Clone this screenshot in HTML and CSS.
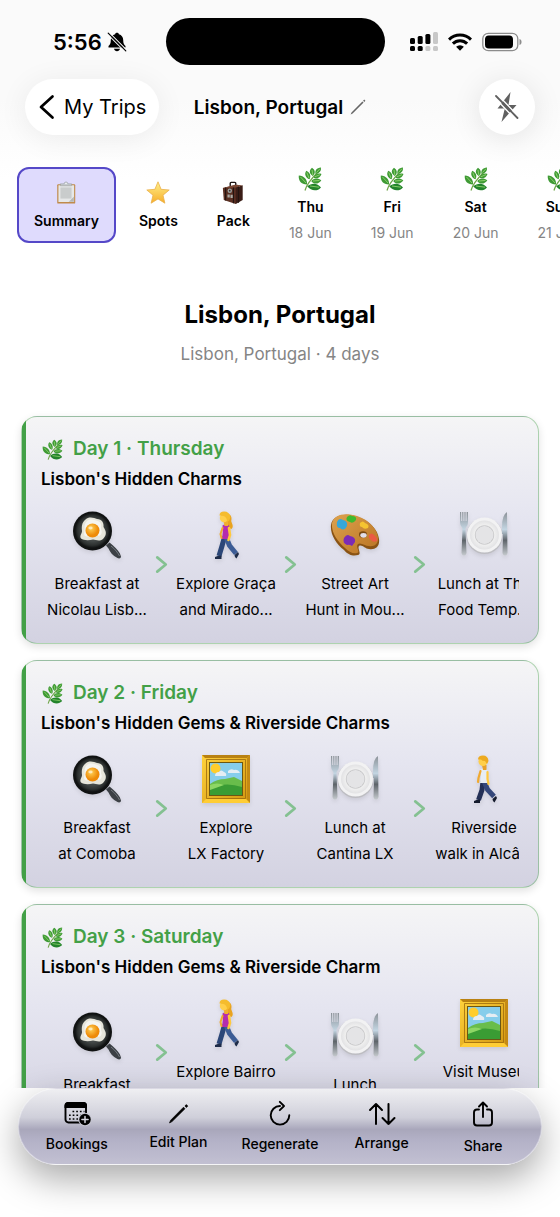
FILE: index.html
```html
<!DOCTYPE html>
<html lang="en">
<head>
    <meta charset="UTF-8">
    <meta name="viewport" content="width=device-width, initial-scale=1.0">
    <title>Lisbon, Portugal</title>
    <link rel="stylesheet" href="styles.css">
</head>
<body>
    <!-- shared icons -->
    <svg class="sprite" aria-hidden="true">
        <defs>
            <linearGradient id="gold" x1="0" y1="0" x2="0" y2="1"><stop offset="0" stop-color="#fff08a"/><stop offset="1" stop-color="#f7ae2a"/></linearGradient>
            <linearGradient id="leafFill" x1="0" y1="0" x2="1" y2="1"><stop offset="0" stop-color="#7cc95a"/><stop offset="1" stop-color="#1f8a2b"/></linearGradient>
            <linearGradient id="frameFill" x1="0" y1="0" x2="1" y2="1"><stop offset="0" stop-color="#ffd23c"/><stop offset="1" stop-color="#d3960f"/></linearGradient>
            <linearGradient id="wood" x1="0" y1="0" x2="1" y2="1"><stop offset="0" stop-color="#dda24e"/><stop offset="1" stop-color="#b97322"/></linearGradient>
            <linearGradient id="steel" x1="0" y1="0" x2="0" y2="1"><stop offset="0" stop-color="#8c9298"/><stop offset=".4" stop-color="#c3d5e2"/><stop offset=".65" stop-color="#5d6369"/><stop offset="1" stop-color="#c5cace"/></linearGradient>
            <radialGradient id="panFill"><stop offset=".6" stop-color="#454a49"/><stop offset=".85" stop-color="#2c302f"/><stop offset="1" stop-color="#101212"/></radialGradient>
            <radialGradient id="yolk" cx=".4" cy=".35"><stop offset="0" stop-color="#ffd257"/><stop offset="1" stop-color="#ee8b08"/></radialGradient>
            <radialGradient id="plateFill"><stop offset=".5" stop-color="#dededf"/><stop offset=".62" stop-color="#c2c2c4"/><stop offset=".7" stop-color="#efefef"/><stop offset="1" stop-color="#e2e2e4"/></radialGradient>
        </defs>
        <symbol id="herb" viewBox="0 0 24 24">
            <path d="M7 23.500C8.500 17 14 11 20 5" fill="none" stroke="#6fa548" stroke-width="1.200"/>
            <g fill="#3f9a35">
                <path d="M23 .5c-4.500.3-6.300 3-5.500 6.300C21.500 6.500 23.300 4 23 .5z"/>
                <path d="M14 .8c-3 2.200-3 6 .8 8.200 3-2.500 2.600-6-.8-8.200z"/>
                <path d="M8.300 3.700c-2.300 3-.8 7 3.200 8.600 2-3.500.3-7-3.200-8.600z"/>
                <path d="M.8 8.500c-.6 5 2.200 9 8.200 9C9.500 12.500 6 8.800.8 8.500z"/>
                <path d="M23.500 7c-3.800-1.200-7 .5-7.800 3.700 3.200 1.600 6.600 0 7.800-3.700z"/>
                <path d="M23.300 13.500c-3.600-3-8-2.300-10 .7 2.700 3.600 7.300 3 10-.7z"/>
                <path d="M23 20.500c-3.500-4.800-9.300-5-13.800-1.200 4 5.200 10.300 5.200 13.800 1.200z" fill="#23832b"/>
            </g>
            <g fill="none" stroke="#8fd46c" stroke-width=".9"><path d="M2.500 10l5.500 6M8.800 5.500l2.200 5.500M14 3l.8 5M12 19l9 1.200M15 14l6.500-.6M18.500 5.500L22 1.700M17 9.700l5-2"/></g>
        </symbol>
        <symbol id="clipboard" viewBox="0 0 24 26">
            <rect x="2.500" y="3.500" width="19.500" height="21" rx="1" fill="#c08a4a"/>
            <path d="M3.800 4.500h17v18.200h-17z" fill="#e6e8e8"/>
            <path d="M6 7h12v12H6z" fill="#c9cccc"/>
            <path d="M20.500 17v5.500H15z" fill="#b4b7b6"/>
            <path d="M6 3h3.700C10 1.800 10.800 1 12 1s2 .8 2.300 2H18v2.200H6z" fill="#c3c9cc" stroke="#8f9699" stroke-width=".5"/>
            <circle cx="12" cy="2.600" r=".8" fill="#fff"/>
        </symbol>
        <symbol id="star" viewBox="0 0 24 24">
            <path d="M12 .8l3.100 7.500 8.100.7-6.200 5.200 1.900 8-6.900-4.300-6.900 4.300 1.900-8L.8 9l8.100-.7z" fill="url(#gold)" stroke="#eab04a" stroke-width=".8" stroke-linejoin="round"/>
        </symbol>
        <symbol id="suitcase" viewBox="0 0 24 26">
            <path d="M9 6V2.500Q9 1.500 10 1.500h4q1 0 1 1V5" fill="none" stroke="#1d1513" stroke-width="1.500"/>
            <path d="M1 7.500L17 4v17.500L15 25 2 20.500z" fill="#5a2f22"/>
            <path d="M15 7l7.500-2.500v16L15 25z" fill="#3a1d16"/>
            <path d="M1 7.500L14 4l8.500.5L15 7z" fill="#7a4734"/>
            <path d="M4 7v14M12.500 7v17M18 6v17.500" stroke="#221410" stroke-width="1.200"/>
            <circle cx="8.500" cy="10.500" r="2.400" fill="#9da5a3"/><circle cx="8.500" cy="10.500" r="1" fill="#42302b"/>
            <path d="M6 14.500h2.500V18H6zM9.300 14.800h2.400v3.500H9.300z" fill="#a9aaa3"/>
        </symbol>
        <symbol id="pan" viewBox="0 0 50 50">
            <path d="M34 35.500l3.500-3 3 2.500c4 3.500 7.500 7 8.500 11.500 0 2-2 2.500-3.500 1.500-5-2.500-7.500-6-9-9.500z" fill="#3c4045"/>
            <path d="M39 36c4 3 7 7 8.500 10" fill="none" stroke="#747a80" stroke-width="1"/>
            <circle cx="20.500" cy="21" r="19.500" fill="#101212"/>
            <circle cx="20.500" cy="20.500" r="17.500" fill="url(#panFill)"/>
            <path d="M13 10c4-4 9-2 12-1 5 0 7 4 6.500 8 2.500 4 4 7.500-.5 12-4 3-7 .5-10 .5-4 1-9.500 1-12-1-2-3 1.500-5 1-8-.5-4 0-8 3-10.500z" fill="#e6e5da"/>
            <path d="M15 11c4-3 8-.5 12 .5 3 2 2 5 2 8 2 3 0 7-4 6.500-5-1-8 1.500-12 0-2-2 0-5-.5-8 0-3 .5-5 2.500-7z" fill="#fff" opacity=".6"/>
            <circle cx="20.500" cy="20.500" r="7" fill="url(#yolk)"/>
            <ellipse cx="18.500" cy="18" rx="2.200" ry="1.400" fill="#fff" opacity=".6"/>
        </symbol>
        <symbol id="walk-woman" viewBox="0 0 50 50">
            <path d="M23.500 27l-2.500 9-3 10" fill="none" stroke="#2c4778" stroke-width="5" stroke-linejoin="round"/>
            <path d="M25 27l3.500 8.500 6.500 8" fill="none" stroke="#3c5c95" stroke-width="5" stroke-linejoin="round"/>
            <path d="M14 47q2-1.500 6.500-1.500V49H14zM33.500 45l3.500-3 1 2-2.500 4.500q-2-1-2-3.500z" fill="#1e2c49"/>
            <path d="M27 4c3.500 1 4 4 3.200 7 .6 3 3 5 .3 8-3.500-1-4.500-3-4.500-6z" fill="#e9a31f"/>
            <path d="M21.500 15.500q3.500-2.500 6.500 0l1 6-1 7.500h-7l.8-7z" fill="#b52cae"/>
            <path d="M21.500 18l-2 6 1 4" fill="none" stroke="#f0a930" stroke-width="2" stroke-linecap="round"/>
            <path d="M28 18l1 7-1.500 5" fill="none" stroke="#ffc83e" stroke-width="2.600" stroke-linecap="round"/>
            <path d="M22.500 11h4.500v5h-3.500z" fill="#f1ae2f"/>
            <circle cx="23" cy="8" r="4.200" fill="#ffcf4a"/>
            <path d="M18.500 5.500q0-4 4.500-4 5.500 0 6.500 5.500-1 4.500-3.500 4.500 0-4.500-3.500-5.500z" fill="#f5bc2d"/>
        </symbol>
        <symbol id="walk-man" viewBox="0 0 50 50">
            <path d="M24 27l-1 9-3.500 10" fill="none" stroke="#232f56" stroke-width="5" stroke-linejoin="round"/>
            <path d="M25 27l3.500 8.500 6.500 7" fill="none" stroke="#34477a" stroke-width="5" stroke-linejoin="round"/>
            <path d="M15 47q2-1.500 6-1.500V49h-6zM33.500 45l3.500-3 1 2-2.500 4.500q-2-1-2-3.500z" fill="#141a2c"/>
            <path d="M21.500 15.500q3.500-2.500 6.500 0l1 6-1 7.500h-7l.8-7z" fill="#e7edf4"/>
            <path d="M21.500 17l-2 7-.5 4" fill="none" stroke="#f0a930" stroke-width="2.200" stroke-linecap="round"/>
            <path d="M28.500 18l0 7 1 5" fill="none" stroke="#ffc83e" stroke-width="2.200" stroke-linecap="round"/>
            <path d="M23 11h4.500v5H24z" fill="#e8a02a"/>
            <circle cx="24" cy="7.500" r="4.500" fill="#ffcf4a"/>
            <path d="M19 5.500q0-4 5-4t5.500 5.500l-1.500 3-2-3q-3 0-4-1.500z" fill="#edaa20"/>
        </symbol>
        <symbol id="palette" viewBox="0 0 50 50">
            <path d="M1 15C2 6 14 2 28 7c12 4 20 13 21 22 1 8-4 11-10 10-4 0-7-5-10-3-2 2 3 8-1 9-4 1-9 1-14-5C6 34 0 24 1 15z" fill="#8a5313"/>
            <path d="M2 13C4 5 14 2 27 6c12 4 20 13 21 21 1 7-4 10-9 9-4 0-8-4-11-2-3 3 3 8-1 9-4 1-8-1-12-5C7 31 1 22 2 13z" fill="url(#wood)"/>
            <ellipse cx="33" cy="24.500" rx="4" ry="3.200" fill="#7a4a12"/><ellipse cx="33.500" cy="25.300" rx="3.200" ry="2.400" fill="#e2dfe8"/>
            <path d="M7 12q2-5 6-2 5 1 4 6-3 6-7 2-4 0-3-6z" fill="#35a7da"/>
            <path d="M17 7q3-3 5-1 5 0 4 4-3 4-6 2-5-1-3-5z" fill="#3eb92f"/>
            <path d="M30 13q3-3 5 0 5 2 3 5-4 2-6-1-3 0-2-4z" fill="#f5c331"/>
            <path d="M39 25q3-3 5 0 4 3 3 6-4 2-6-1-3-2-2-5z" fill="#ea5a43"/>
            <path d="M14 28q3-5 6-2 6 1 5 6l-3 4q-3-2-5-1-5-2-3-7z" fill="#7c2bb5"/>
        </symbol>
        <symbol id="plate" viewBox="0 0 50 50">
            <circle cx="25.500" cy="26" r="18" fill="#bdbdc2"/>
            <circle cx="25.500" cy="25" r="17.500" fill="#f2f2f3"/>
            <circle cx="25.500" cy="25" r="14.500" fill="url(#plateFill)"/>
            <circle cx="25.500" cy="25" r="9" fill="#e4e4e6"/>
            <path d="M1 2h1.200v9h1V2h1.200v9h1V2h1.200v9h1V2H9v10c0 4-2.500 5-2.500 7L7.500 43q-.5 2.500-2.500 2.500T2.500 43l1-24c0-2-2.500-3-2.500-7z" fill="url(#steel)"/>
            <path d="M48 2q-5 3-5 15v7h1l-.5 19q.5 2.500 2.500 2.500t2.500-2.500z" fill="url(#steel)"/>
        </symbol>
        <symbol id="painting" viewBox="0 0 50 50">
            <path d="M1 1h48v48H1z" fill="url(#frameFill)"/>
            <path d="M1 1h48l-3 3H4z" fill="#b98112"/><path d="M49 1v48l-3-3V4z" fill="#c48a14"/>
            <path d="M1 49h48l-4-4H5z" fill="#ffcd35"/>
            <path d="M5.500 5.500h39v39h-39z" fill="none" stroke="#9c6a0c" stroke-width=".8"/>
            <path d="M8 8h34v34H8z" fill="#6b5713"/>
            <path d="M9 9h32v32H9z" fill="#86cdeb"/>
            <circle cx="14.500" cy="14.500" r="5" fill="#ffcd2c"/>
            <path d="M14 22q0-4 4-4 2-3 5 0 3 1 2 4zM27 17q3-3 6-1 4-1 6 3H27z" fill="#e5edf3"/>
            <path d="M9 30q7-5 15-5l9-2 8 4v14H9z" fill="#69bd4b"/>
            <path d="M9 35q14-8 32-2v8H9z" fill="#3a9c34"/>
            <path d="M9 31q7-3 14 0l-14 5z" fill="#8ed765"/>
        </symbol>
        <symbol id="chevron" viewBox="0 0 12 20">
            <path d="M1.500 2.500l9 7.500-9 7.500" fill="none" stroke="currentColor" stroke-width="2.800" stroke-linecap="round" stroke-linejoin="round"/>
        </symbol>
    </svg>

    <div class="app">
        <div class="status-bar">
            <div class="status-left">
                <span class="clock">5:56</span>
                <svg width="20" height="20" viewBox="0 0 20 20">
                    <path d="M10 .8c1 0 1.800.6 1.900 1.400 2.800.8 4.300 3 4.300 5.800 0 3.300.8 4.700 2.300 6v1.400H1.500V14c1.500-1.300 2.300-2.700 2.300-6 0-2.800 1.500-5 4.300-5.800C8.200 1.400 9 .8 10 .8zM7 16.800h6c-.3 1.500-1.500 2.400-3 2.400s-2.700-.9-3-2.400z"/>
                    <path d="M2.500.8l17 17M.5 2.200l17 17" stroke="#fafafa" stroke-width="1.100"/>
                    <path d="M1.200 1.200l17.600 17.600" stroke="#000" stroke-width="1.200" stroke-linecap="round"/>
                </svg>
            </div>
            <div class="island"></div>
            <div class="status-right">
                <svg width="28" height="20" viewBox="0 0 28 20">
                    <rect y="6" width="5" height="6" rx="1.500"/><rect x="7.700" y="4" width="5" height="8" rx="1.500"/><rect x="15.400" y="2" width="5" height="10" rx="1.500"/><rect x="23" width="5" height="12" rx="1.500" fill="#c8c8c8"/>
                    <rect y="14" width="5" height="5" rx="1.500"/><rect x="7.700" y="14" width="5" height="5" rx="1.500"/><rect x="15.400" y="14" width="5" height="5" rx="1.500" fill="#c8c8c8"/><rect x="23" y="14" width="5" height="5" rx="1.500" fill="#c8c8c8"/>
                </svg>
                <svg width="24" height="18" viewBox="0 0 24 18">
                    <g fill="none" stroke="#000" stroke-width="3"><path d="M1 6.600a15.600 15.600 0 0 1 22 0"/><path d="M4.900 10.600a10 10 0 0 1 14.200 0"/></g>
                    <path d="M12 17.800l-3.900-4a5.600 5.600 0 0 1 7.800 0z"/>
                </svg>
                <svg width="40" height="20" viewBox="0 0 40 20">
                    <rect x=".8" y="1.300" width="35" height="17.400" rx="5.500" fill="none" stroke="#8c8c8c" stroke-width="1.300"/>
                    <rect x="3" y="3.500" width="28" height="13" rx="3.800"/>
                    <path d="M37.500 7c1.700.6 2 1.700 2 3s-.3 2.400-2 3z" fill="#8c8c8c"/>
                </svg>
            </div>
        </div>

        <header class="nav">
            <a href="#" class="back">
                <svg width="16" height="26" viewBox="0 0 16 26"><path d="M13.500 2.500L2 13l11.500 10.500" fill="none" stroke="#000" stroke-width="2.700" stroke-linecap="round" stroke-linejoin="round"/></svg>
                My Trips
            </a>
            <button class="rename">
                Lisbon, Portugal
                <svg width="16" height="16" viewBox="0 0 16 16"><path d="M14.200.6l1.200 1.200-1.100 1.100-1.200-1.200zM12.400 2.400l1.200 1.200L2.600 14.400l-2 1 .9-2z" fill="#666"/></svg>
            </button>
            <button class="flash" aria-label="Quick actions off">
                <svg width="26" height="32" viewBox="0 0 26 32">
                    <path d="M16.500 1L3.500 17.500h7.300L7.500 31 22.500 14h-8z" fill="#606060"/>
                    <path d="M3.500 3.500L25 26M.5 6.500L22 29" stroke="#fff" stroke-width="1.400"/>
                    <path d="M2 5l21.500 22" stroke="#606060" stroke-width="1.800" stroke-linecap="round"/>
                </svg>
            </button>
        </header>

        <main class="content">
            <nav class="tabs">
                <button class="tab active"><svg class="tab-icon"><use href="#clipboard"/></svg><span class="tab-name">Summary</span></button>
                <button class="tab"><svg class="tab-icon"><use href="#star"/></svg><span class="tab-name">Spots</span></button>
                <button class="tab"><svg class="tab-icon"><use href="#suitcase"/></svg><span class="tab-name">Pack</span></button>
                <button class="tab"><svg class="tab-icon"><use href="#herb"/></svg><span class="tab-name">Thu</span><span class="tab-date">18 Jun</span></button>
                <button class="tab"><svg class="tab-icon"><use href="#herb"/></svg><span class="tab-name">Fri</span><span class="tab-date">19 Jun</span></button>
                <button class="tab"><svg class="tab-icon"><use href="#herb"/></svg><span class="tab-name">Sat</span><span class="tab-date">20 Jun</span></button>
                <button class="tab"><svg class="tab-icon"><use href="#herb"/></svg><span class="tab-name">Sun</span><span class="tab-date">21 Jun</span></button>
            </nav>

            <section class="hero">
                <h1>Lisbon, Portugal</h1>
                <p>Lisbon, Portugal · 4 days</p>
            </section>

            <div class="days">
                <article class="day">
                    <h2><svg class="day-icon"><use href="#herb"/></svg>Day 1 · Thursday</h2>
                    <h3>Lisbon's Hidden Charms</h3>
                    <div class="stops">
                        <div class="stop"><svg><use href="#pan"/></svg><p>Breakfast at<br>Nicolau Lisb...</p></div>
                        <svg class="arrow"><use href="#chevron"/></svg>
                        <div class="stop"><svg><use href="#walk-woman"/></svg><p>Explore Graça<br>and Mirado...</p></div>
                        <svg class="arrow"><use href="#chevron"/></svg>
                        <div class="stop"><svg><use href="#palette"/></svg><p>Street Art<br>Hunt in Mou...</p></div>
                        <svg class="arrow"><use href="#chevron"/></svg>
                        <div class="stop"><svg><use href="#plate"/></svg><p>Lunch at The<br>Food Temp...</p></div>
                    </div>
                </article>

                <article class="day">
                    <h2><svg class="day-icon"><use href="#herb"/></svg>Day 2 · Friday</h2>
                    <h3>Lisbon's Hidden Gems &amp; Riverside Charms</h3>
                    <div class="stops">
                        <div class="stop"><svg><use href="#pan"/></svg><p>Breakfast<br>at Comoba</p></div>
                        <svg class="arrow"><use href="#chevron"/></svg>
                        <div class="stop"><svg><use href="#painting"/></svg><p>Explore<br>LX Factory</p></div>
                        <svg class="arrow"><use href="#chevron"/></svg>
                        <div class="stop"><svg><use href="#plate"/></svg><p>Lunch at<br>Cantina LX</p></div>
                        <svg class="arrow"><use href="#chevron"/></svg>
                        <div class="stop"><svg><use href="#walk-man"/></svg><p>Riverside<br>walk in Alcâ...</p></div>
                    </div>
                </article>

                <article class="day">
                    <h2><svg class="day-icon"><use href="#herb"/></svg>Day 3 · Saturday</h2>
                    <h3>Lisbon's Hidden Gems &amp; Riverside Charm</h3>
                    <div class="stops">
                        <div class="stop"><svg><use href="#pan"/></svg><p>Breakfast</p></div>
                        <svg class="arrow"><use href="#chevron"/></svg>
                        <div class="stop"><svg><use href="#walk-woman"/></svg><p>Explore Bairro<br>&nbsp;</p></div>
                        <svg class="arrow"><use href="#chevron"/></svg>
                        <div class="stop"><svg><use href="#plate"/></svg><p>Lunch</p></div>
                        <svg class="arrow"><use href="#chevron"/></svg>
                        <div class="stop"><svg><use href="#painting"/></svg><p>Visit Museu<br>&nbsp;</p></div>
                    </div>
                </article>
            </div>
        </main>

        <footer class="toolbar">
            <button class="tool">
                <svg width="28" height="28" viewBox="0 0 28 28">
                    <rect x="2.500" y="3" width="20.500" height="19.500" rx="3" fill="none" stroke="#000" stroke-width="1.900"/>
                    <path d="M1.500 8V5.500q0-3.500 3.500-3.500h15.500Q24 2 24 5.500V8z"/>
                    <path d="M9.500 11.500h12M6 15.300h14M6 19h9" fill="none" stroke="#000" stroke-width="1.600" stroke-dasharray="1.700 2"/>
                    <circle cx="22" cy="19.500" r="6.800" fill="#c6c6d1"/>
                    <circle cx="22" cy="19.500" r="5.700"/>
                    <path d="M22 16.400v6.200M18.900 19.500h6.200" stroke="#d6d6df" stroke-width="1.500" stroke-linecap="round"/>
                </svg>
                Bookings
            </button>
            <button class="tool">
                <svg width="24" height="24" viewBox="0 0 24 24"><path d="M20.300 2.600l1.500 1.500-1.400 1.400-1.500-1.500zM17.500 5.200l1.500 1.500L6 19.600 3.500 20.900l1.200-2.700z" stroke="#000" stroke-width=".7" stroke-linejoin="round"/></svg>
                Edit Plan
            </button>
            <button class="tool">
                <svg width="28" height="28" viewBox="0 0 28 28"><g fill="none" stroke="#000" stroke-width="1.900" stroke-linecap="round" stroke-linejoin="round"><path d="M14 6a9.300 9.300 0 1 0 9.300 9.300"/><path d="M13.800 1.800L18 6l-4.200 4.200"/></g></svg>
                Regenerate
            </button>
            <button class="tool">
                <svg width="28" height="26" viewBox="0 0 28 26"><path d="M8 23V3M2 9l6-6 6 6M20.500 3v20M14.500 17l6 6 6-6" fill="none" stroke="#000" stroke-width="2" stroke-linecap="round" stroke-linejoin="round"/></svg>
                Arrange
            </button>
            <button class="tool">
                <svg width="26" height="32" viewBox="0 0 26 32"><path d="M9 11.500H7q-3 0-3 3v10q0 3 3 3h12q3 0 3-3v-10q0-3-3-3h-2M13 19V5M9 8.500l4-4 4 4" fill="none" stroke="#000" stroke-width="1.900" stroke-linecap="round" stroke-linejoin="round"/></svg>
                Share
            </button>
        </footer>
    </div>
</body>
</html>
```

FILE: styles.css
```css
* {
    margin: 0;
    padding: 0;
    box-sizing: border-box;
}

body {
    font-family: Inter, "Noto Sans", sans-serif;
    background: #fff;
    color: #000;
}

button {
    font: inherit;
    color: inherit;
    background: none;
    border: none;
    cursor: pointer;
}

svg {
    display: block;
    flex-shrink: 0;
}

.sprite {
    position: absolute;
    width: 0;
    height: 0;
}

.app {
    height: 100vh;
    display: flex;
    flex-direction: column;
    background: linear-gradient(#fafafa, #fafafa 100px, #fff 180px);
}

/* status bar */
.status-bar {
    display: grid;
    grid-template-columns: 1fr auto 1fr;
    align-items: center;
    padding: 18px 9px 14px 0;
}

.island {
    width: 219px;
    height: 47px;
    border-radius: 24px;
    background: #000;
}

.status-left {
    display: flex;
    align-items: center;
    gap: 5px;
    padding-left: 53px;
}

.clock {
    font-size: 22px;
    font-weight: 600;
}

.status-right {
    display: flex;
    align-items: center;
    gap: 10px;
    padding-left: 25px;
}

/* navigation */
.nav {
    display: grid;
    grid-template-columns: 1fr auto 1fr;
    align-items: center;
    padding: 0 25px;
    margin-bottom: 17px;
}

.back {
    justify-self: start;
    display: flex;
    align-items: center;
    gap: 9px;
    height: 56px;
    padding: 0 13px 0 14px;
    border-radius: 28px;
    background: #fff;
    box-shadow: 0 4px 30px rgba(0, 0, 0, 0.07);
    color: #000;
    font-size: 20px;
    text-decoration: none;
}

.rename {
    display: flex;
    align-items: center;
    gap: 7px;
    font-size: 19px;
    font-weight: 600;
}

.flash {
    justify-self: end;
    display: flex;
    align-items: center;
    justify-content: center;
    width: 56px;
    height: 56px;
    border-radius: 50%;
    background: #fff;
    box-shadow: 0 4px 30px rgba(0, 0, 0, 0.1);
}

.content {
    flex: 1;
    min-height: 0;
    overflow-x: hidden;
    overflow-y: auto;
    scrollbar-width: none;
}

/* tabs */
.tabs {
    display: flex;
    gap: 7px;
    padding: 15px 17px 0;
    overflow: hidden;
}

.tab {
    flex-shrink: 0;
    display: flex;
    flex-direction: column;
    align-items: center;
    justify-content: center;
    gap: 7px;
    padding: 0 16px;
    border-radius: 12px;
}

.tab.active {
    padding: 0 15px;
    border: 2px solid #5548c8;
    background: #dfdbfd;
}

.tab-icon {
    width: 24px;
    height: 24px;
}

.tab-name {
    font-size: 14px;
    font-weight: 600;
    line-height: 18px;
}

.tab-date {
    color: #858585;
    font-size: 14px;
    line-height: 20px;
}

.hero {
    padding: 56px 20px 48px;
    text-align: center;
}

.hero h1 {
    margin-bottom: 9px;
    font-size: 24px;
    font-weight: 700;
    line-height: 32px;
}

.hero p {
    color: #858585;
    font-size: 17px;
    line-height: 28px;
}

/* day cards */
.days {
    display: flex;
    flex-direction: column;
    gap: 16px;
    padding: 0 21px 16px;
}

.day {
    padding: 20px 19px;
    border: 1px solid rgba(67, 160, 71, 0.4);
    border-radius: 16px;
    background:
        linear-gradient(#43a047, #43a047) left / 4px 100% no-repeat,
        linear-gradient(#f5f5f6, #e5e5f0 45%, #d3d2e1);
    box-shadow: 0 3px 8px rgba(0, 0, 0, 0.12);
}

.day h2 {
    display: flex;
    align-items: center;
    gap: 9px;
    margin-bottom: 8px;
    color: #43a047;
    font-size: 19px;
    font-weight: 600;
    line-height: 24px;
}

.day-icon {
    width: 23px;
    height: 21px;
}

.day h3 {
    margin-bottom: 16px;
    font-size: 17px;
    font-weight: 600;
    line-height: 20px;
}

.stops {
    display: flex;
    align-items: center;
    overflow: hidden;
}

.stop {
    flex: 0 0 112px;
    text-align: center;
}

.stop svg {
    width: 50px;
    height: 50px;
    margin: 5px auto 11px;
    filter: drop-shadow(0 2px 2px rgba(0, 0, 0, 0.1));
}

.stop p {
    font-size: 15px;
    line-height: 26px;
    white-space: nowrap;
}

.arrow {
    width: 17px;
    height: 19px;
    color: #84c191;
}

/* bottom toolbar */
.toolbar {
    display: flex;
    align-items: center;
    height: 77px;
    margin: 0 18px 52px;
    padding: 0 7px;
    border: 1px solid rgba(255, 255, 255, 0.4);
    border-radius: 39px;
    background: linear-gradient(#efeff2, #cfcfda 38%, #a9a7bb 54%, #b3b1c7 68%, #c2c0d2);
    box-shadow: 0 14px 36px rgba(0, 0, 0, 0.34);
}

.tool {
    flex: 1;
    display: flex;
    flex-direction: column;
    align-items: center;
    gap: 6px;
    font-size: 14px;
    font-weight: 500;
    line-height: 20px;
}
```
